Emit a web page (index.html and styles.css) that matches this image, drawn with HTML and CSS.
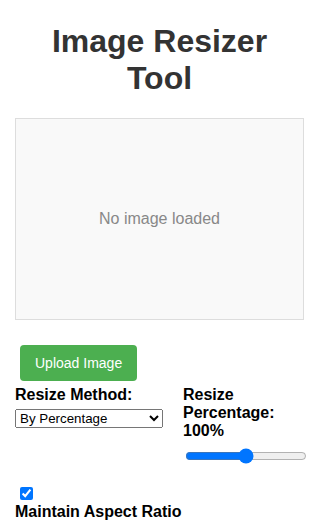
FILE: index.html
```html
<!DOCTYPE html>
<html lang="en">
<head>
    <meta charset="UTF-8">
    <meta name="viewport" content="width=device-width, initial-scale=1.0">
    <title>Image Resizer Tool</title>
    <link rel="stylesheet" href="styles.css">
</head>
<body>
    <div class="container">
        <h1>Image Resizer Tool</h1>

        <div class="preview">
            <span>No image loaded</span>
        </div>

        <button class="upload-button">Upload Image</button>

        <div class="controls">
            <div class="control-group method-group">
                <label for="method">Resize Method:</label>
                <select id="method">
                    <option>By Percentage</option>
                    <option>By Dimensions</option>
                </select>
            </div>
            <div class="control-group percent-group">
                <label for="percent">Resize Percentage: 100%</label>
                <input type="range" id="percent" class="slider" min="1" max="200" value="100">
            </div>
            <div class="control-group aspect-group">
                <input type="checkbox" id="aspect" checked>
                <label for="aspect">Maintain Aspect Ratio</label>
            </div>
        </div>
    </div>
</body>
</html>
```

FILE: styles.css
```css
body {
    font-family: "Liberation Sans", Arial, sans-serif;
    margin: 0;
    background-color: #fff;
}
.container {
    width: 289px;
    margin-left: 15px;
}
h1 {
    text-align: center;
    font-size: 32px;
    color: #333;
    margin: 23px 0 21px;
}
.preview {
    height: 200px;
    border: 1px solid #ddd;
    background-color: #f9f9f9;
    display: flex;
    align-items: center;
    justify-content: center;
    color: #888;
    font-size: 16px;
    margin-bottom: 20px;
}
.upload-button {
    font-family: "Liberation Sans", Arial, sans-serif;
    font-size: 14px;
    padding: 10px 15px;
    margin: 5px;
    background-color: #4CAF50;
    color: white;
    border: none;
    border-radius: 4px;
    cursor: pointer;
}
.controls {
    display: flex;
    flex-wrap: wrap;
    gap: 16px 20px;
}
.control-group label {
    display: block;
    font-weight: bold;
    font-size: 16px;
}
.method-group select {
    width: 148px;
    margin-top: 5px;
}
.percent-group {
    flex: 1 1 0;
    min-width: 0;
}
.slider {
    width: 122px;
    margin: 8px 2px 2px;
}
.aspect-group {
    width: 100%;
}
.aspect-group input {
    display: block;
    margin: 3px 3px 3px 5px;
}
```
